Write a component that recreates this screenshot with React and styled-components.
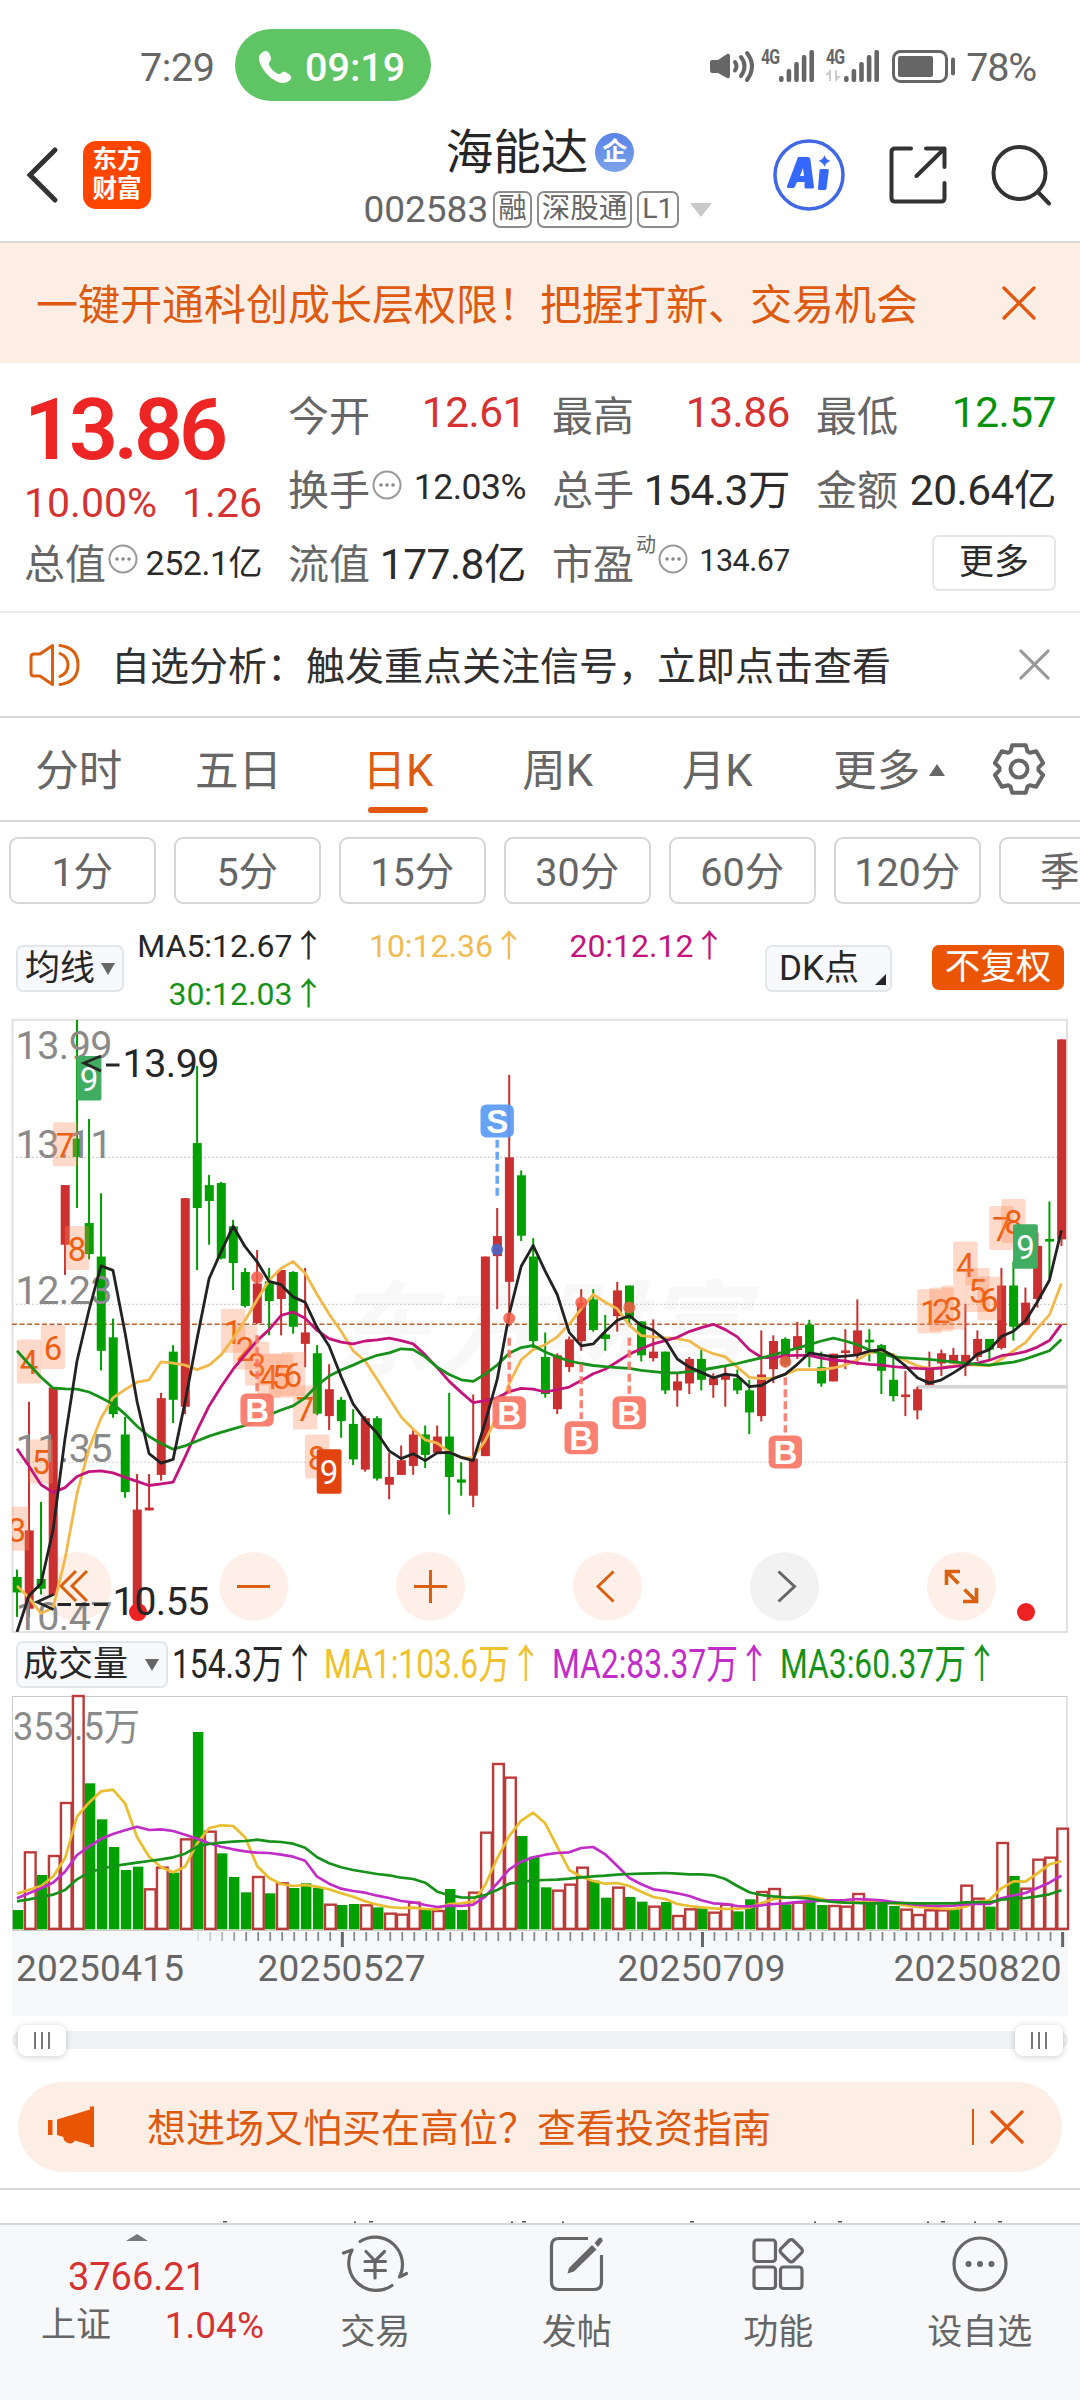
import React from "react";
import styled, { createGlobalStyle, css } from "styled-components";

const GlobalStyle = createGlobalStyle`
  * {
    box-sizing: border-box;
  }
  body {
    margin: 0;
    background: #fff;
    font-family: Roboto, "Noto Sans CJK SC", sans-serif;
    color: #262626;
  }
  svg {
    display: block;
    flex-shrink: 0;
    overflow: visible;
  }
`;

const Page = styled.div`
  width: 1080px;
  height: 2400px;
  display: flex;
  flex-direction: column;
  overflow: hidden;
  background: #fff;
`;

/* ---------- status bar ---------- */
const StatusBar = styled.div`
  height: 131px;
  padding: 0 44px 0 140px;
  display: flex;
  align-items: center;
  color: #666;
  font-size: 39.5px;
`;
const Clock = styled.span`
  width: 95px;
  padding-top: 4px;
  letter-spacing: -0.4px;
`;
const CallPill = styled.div`
  width: 196px;
  height: 72px;
  border-radius: 36px;
  background: #5fc564;
  color: #fff;
  font-weight: 500;
  display: flex;
  align-items: center;
  padding: 4px 0 0 23px;
  gap: 13px;
`;
const StatusIcons = styled.div`
  margin-left: auto;
  padding-top: 4px;
  display: flex;
  align-items: center;
  gap: 10px;
  letter-spacing: -1.2px;
`;

/* ---------- header ---------- */
const Header = styled.header`
  height: 112px;
  display: grid;
  grid-template-columns: 310px 460px 310px;
  border-bottom: 2px solid #dadada;
`;
const HeaderLeft = styled.div`
  display: flex;
  align-items: center;
  padding: 0 0 22px 25px;
  gap: 24px;
`;
const Logo = styled.div`
  width: 68px;
  height: 68px;
  border-radius: 13px;
  background: #ff4600;
  color: #fff;
  font-size: 24.5px;
  font-weight: 700;
  line-height: 29px;
  padding-top: 4px;
  text-align: center;
`;
const HeaderCenter = styled.div`
  display: flex;
  flex-direction: column;
  align-items: center;
`;
const TitleRow = styled.div`
  height: 45px;
  display: flex;
  align-items: center;
  gap: 7px;
  font-size: 47.5px;
  line-height: 45px;
`;
const CompanyBadge = styled.span`
  width: 39px;
  height: 39px;
  margin-bottom: 2px;
  border-radius: 50%;
  background: linear-gradient(#5a83e8, #7ba3ea);
  color: #fff;
  font-size: 25px;
  font-weight: 700;
  line-height: 38px;
  text-align: center;
`;
const CodeRow = styled.div`
  margin: 14px 5px 0 0;
  display: flex;
  align-items: center;
  gap: 5px;
  color: #666;
  font-size: 37px;
  line-height: 40px;
`;
const Tag = styled.span`
  height: 37px;
  padding: 0 3px;
  border: 2px solid #8c8c8c;
  border-radius: 7px;
  font-size: 28.5px;
  line-height: 32px;
`;
const DownCaret = styled.i`
  border: 11px solid transparent;
  border-top: 14px solid #c9c9c9;
  border-bottom: 0;
  margin-left: 6px;
`;
const HeaderRight = styled.div`
  display: flex;
  align-items: center;
  padding: 0 0 21px 3px;
  gap: 43px;
`;

/* ---------- banner ---------- */
const Banner = styled.div`
  height: 120px;
  background: #fdeee5;
  color: #dd5a10;
  font-size: 42px;
  display: flex;
  align-items: center;
  justify-content: space-between;
  padding: 0 44px 0 36px;
`;
const BannerText = styled.span`
  padding-bottom: 2px;
`;

/* ---------- quote ---------- */
const Quote = styled.section`
  height: 251px;
  padding: 13px 24px 0 24px;
  display: grid;
  grid-template-columns: 238px 238px 238px 240px;
  grid-template-rows: 74px 74px 74px;
  column-gap: 26px;
  border-bottom: 2px solid #ececec;
`;
const PriceCell = styled.div`
  grid-row: span 2;
  padding-top: 4px;
`;
const Price = styled.div`
  font-size: 86px;
  font-weight: 600;
  letter-spacing: -4.2px;
  line-height: 100px;
  color: #ee2525;
`;
const Change = styled.div`
  display: flex;
  justify-content: space-between;
  font-size: 41px;
  line-height: 46px;
  color: #d63232;
`;
const Cell = styled.div`
  display: flex;
  align-items: center;
  white-space: nowrap;
`;
const Label = styled.span`
  color: #666;
  font-size: 41px;
`;
const Value = styled.span`
  margin-left: auto;
  font-size: ${(p) => p.$size || 42.5}px;
  letter-spacing: -0.5px;
  color: ${(p) => p.$color || "#2b2b2b"};
`;
const Sup = styled.sup`
  align-self: flex-start;
  margin: 7px 0 0 2px;
  color: #666;
  font-size: 20px;
  line-height: 28px;
`;
const InfoMark = styled.span`
  margin: 0 0 4px 2px;
`;
const MoreButton = styled.button`
  width: 124px;
  height: 56px;
  margin: 11px 0 0 auto;
  border: 2px solid #e6e6e6;
  border-radius: 7px;
  background: #fff;
  color: #2b2b2b;
  font: 35px/48px Roboto, "Noto Sans CJK SC", sans-serif;
  padding: 0;
`;

/* ---------- notice ---------- */
const Notice = styled.div`
  height: 105px;
  padding: 0 30px 0 29px;
  display: flex;
  align-items: center;
  border-bottom: 2px solid #d8d8d8;
  font-size: 39px;
  color: #303030;
`;
const NoticeText = styled.span`
  flex: 1;
  padding: 0 0 3px 30px;
`;

/* ---------- tabs ---------- */
const Tabs = styled.nav`
  height: 104px;
  display: flex;
  border-bottom: 2px solid #d8d8d8;
  padding-right: 34px;
`;
const Tab = styled.div`
  width: 159.6px;
  display: flex;
  justify-content: center;
  position: relative;
  left: -1px;
  font-size: 43.5px;
  line-height: 108px;
  color: ${(p) => (p.$active ? "#dd5a10" : "#666")};
  ${(p) =>
    p.$active &&
    css`
      &::after {
        content: "";
        position: absolute;
        bottom: 7px;
        width: 60px;
        height: 6px;
        border-radius: 3px;
        background: #e4570f;
      }
    `}
`;
const UpCaret = styled.i`
  position: absolute;
  right: 12px;
  top: 46px;
  border: 8px solid transparent;
  border-bottom: 12px solid #666;
  border-top: 0;
`;
const GearWrap = styled.div`
  margin: 24px 0 0 auto;
`;

const Periods = styled.div`
  height: 81px;
  padding: 15px 0 0 9px;
  display: flex;
  gap: 18.5px;
`;
const Period = styled.div`
  flex: 0 0 146.5px;
  height: 67px;
  border: 2px solid #d6d6d6;
  border-radius: 9px;
  color: #666;
  font-size: 39.5px;
  line-height: 67px;
  text-align: center;
`;

/* ---------- indicators ---------- */
const IndicatorRow = styled.div`
  height: 107px;
  display: flex;
  padding: 0 16px;
`;
const Select = styled.div`
  width: ${(p) => p.$width}px;
  height: 47px;
  border: 2px solid #e2e6eb;
  border-radius: 7px;
  background: #f7f9fc;
  font-size: 35px;
  line-height: 42px;
  display: flex;
  align-items: center;
  justify-content: space-between;
  padding: 0 7px 0 ${(p) => p.$pad || 7}px;
`;
const SmallCaret = styled.i`
  border: 7.5px solid transparent;
  border-top: 12px solid #666;
  border-bottom: 0;
`;
const CornerMark = styled.i`
  align-self: flex-end;
  margin-bottom: 5px;
  border-left: 11px solid transparent;
  border-bottom: 11px solid #262626;
  margin-right: -3px;
`;
const Averages = styled.div`
  display: grid;
  grid-template-columns: repeat(3, 200.5px);
  grid-auto-rows: 48px;
  margin: 19px auto 0 0;
`;
const Average = styled.span`
  color: ${(p) => p.$color};
  text-align: right;
  font-size: 32px;
  line-height: 48px;
  white-space: nowrap;
`;
const RightTools = styled.div`
  display: flex;
  gap: 40px;
`;
const Adjust = styled.div`
  width: 132px;
  height: 45px;
  border-radius: 7px;
  background: #ea5504;
  color: #fff;
  font-size: 35.5px;
  line-height: 45px;
  text-align: center;
`;
const Dropped = styled.div`
  margin-top: 42px;
`;

const VolumeRow = styled.div`
  height: 54px;
  padding: 5px 16px 0;
  display: flex;
`;
const VolumeSelect = styled(Select)`
  padding-left: 5px;
`;
const VolumeValue = styled.span`
  width: ${(p) => p.$width}px;
  color: ${(p) => p.$color};
  white-space: nowrap;
  font-size: 40px;
  line-height: 48px;
  transform: scaleX(0.795);
  transform-origin: 0 50%;
`;
const VolumeValues = styled.div`
  display: flex;
  padding-left: 4px;
`;

/* ---------- range slider ---------- */
const Slider = styled.div`
  height: 66px;
  padding: 0 12px 18px;
  display: flex;
  align-items: center;
`;
const Track = styled.div`
  flex: 1;
  height: 18px;
  border-radius: 9px;
  background: #f0f1f4;
  display: flex;
  align-items: center;
  justify-content: space-between;
  padding: 0 5px 0 6px;
`;
const Handle = styled.div`
  width: 48px;
  height: 31px;
  border-radius: 8px;
  background: #fff;
  box-shadow: 0 1px 6px rgba(0, 0, 0, 0.2);
  display: flex;
  align-items: center;
  justify-content: center;
  gap: 5px;
`;
const Grip = styled.i`
  width: 2px;
  height: 17px;
  background: #777;
`;

/* ---------- guide ---------- */
const Guide = styled.div`
  margin: 0 18px;
  height: 90px;
  border-radius: 45px;
  background: #fdeee5;
  color: #dd5a10;
  font-size: 39px;
  display: flex;
  align-items: center;
  padding: 0 38px 1px 30px;
`;
const GuideText = styled.span`
  flex: 1;
  padding: 0 0 3px 52px;
`;
const Divider = styled.i`
  width: 2px;
  height: 36px;
  margin-right: 16px;
  background: #dd5a10;
`;
const NextSection = styled.div`
  margin-top: 16px;
  height: 35px;
  border-top: 2px solid #d8d8d8;
  display: flex;
  align-items: flex-end;
`;

/* ---------- bottom bar ---------- */
const BottomBar = styled.footer`
  height: 177px;
  border-top: 2px solid #d4d6d9;
  background: #f7f8fa;
  display: grid;
  grid-template-columns: 274px repeat(4, 201.5px);
  color: #666;
  font-size: 35px;
`;
const IndexCell = styled.div`
  display: flex;
  flex-direction: column;
  align-items: center;
`;
const IndexCaret = styled.i`
  margin: 9px 0 9px;
  border: 11px solid transparent;
  border-bottom: 7px solid #77787c;
  border-top: 0;
`;
const IndexValue = styled.div`
  color: #d63232;
  font-size: 38px;
  line-height: 54px;
`;
const IndexRow = styled.div`
  width: 100%;
  padding: 1px 10px 0 41px;
  display: flex;
  justify-content: space-between;
  line-height: 42px;
`;
const Percent = styled.span`
  color: #d63232;
  font-size: 37px;
`;
const NavItem = styled.div`
  display: flex;
  flex-direction: column;
  align-items: center;
  padding: 5px 0 0 1px;
  line-height: 44px;
`;
const NavLabel = styled.span`
  margin-top: 13px;
`;

/* ---------- icons ---------- */
const CloseIcon = ({ size = 34, color = "#e4570f" }) => (
  <svg width={size} height={size} viewBox="0 0 34 34">
    <path d="M2 2 L32 32 M32 2 L2 32" stroke={color} strokeWidth="3.300" strokeLinecap="round" />
  </svg>
);

const PhoneIcon = () => (
  <svg width="34" height="36" viewBox="0 0 34 36">
    <path
      d="M5 3 C9 0 12 4 13 9 C13.500 12 10 13 11 16 C13 20 16 23 20 25 C23 26 24 22 27 23 C32 25 35 28 32 31 C29 34 25 35 20 33 C11 29 3 20 1 11 C0.500 7 2 5 5 3 Z"
      fill="#fff"
    />
  </svg>
);

const InfoDots = () => (
  <svg width="30" height="30" viewBox="0 0 30 30">
    <circle cx="15" cy="15" r="13.500" fill="none" stroke="#999" strokeWidth="2" />
    <circle cx="9" cy="15" r="1.800" fill="#888" />
    <circle cx="15" cy="15" r="1.800" fill="#888" />
    <circle cx="21" cy="15" r="1.800" fill="#888" />
  </svg>
);

const StatusGlyphs = () => (
  <svg width="246" height="36" viewBox="0 0 246 36" fill="#666">
    <path d="M2 11 H8 L17 5 Q20 4 20 7 V27 Q20 30 17 29 L8 24 H2 Q0 24 0 21 V14 Q0 11 2 11 Z" />
    <g fill="none" stroke="#666" strokeWidth="4" strokeLinecap="round">
      <path d="M25 13 Q28 17 25 21.500" />
      <path d="M31 8 Q38 17 31 27" />
      <path d="M37 4 Q47 17 37 31" />
    </g>
    <text x="51" y="15" fontSize="20" fontWeight="700" textLength="18" lengthAdjust="spacingAndGlyphs">4G</text>
    <text x="116" y="15" fontSize="20" fontWeight="700" textLength="18" lengthAdjust="spacingAndGlyphs">4G</text>
    <path d="M115 26 L121 20 V32 H119 V26 Z M131 27 L125 33 V21 H127 V27 Z" fill="#ccc" />
    {[0, 65].map((dx) =>
      [6, 13, 20, 27, 32].map((h, i) => (
        <rect key={dx + "-" + i} x={69 + dx + i * 7.6} y={32 - h + 1} width="4.600" height={h} rx="2" />
      ))
    )}
    <rect x="183.500" y="2.500" width="53" height="30" rx="7" fill="none" stroke="#666" strokeWidth="3" />
    <rect x="188" y="7" width="35" height="21" rx="2" />
    <rect x="241" y="8.500" width="4" height="18" rx="2" />
  </svg>
);

const BackIcon = () => (
  <svg width="34" height="56" viewBox="0 0 34 56">
    <path d="M30 3 L5 28 L30 53" fill="none" stroke="#333" strokeWidth="5" strokeLinecap="round" />
  </svg>
);

const AiIcon = () => (
  <svg width="72" height="72" viewBox="0 0 72 72">
    <circle cx="36" cy="36" r="34" fill="none" stroke="#4067e6" strokeWidth="3.500" />
    <path
      fillRule="evenodd"
      fill="#3568ff"
      d="M25 18 H35 Q37 18 37.300 20 L41 48 Q41 49.500 39.500 49.500 H33 Q31.500 49.500 31.500 48 V43 H24 L22 47.500 Q21.300 49 20 49 H15 Q13.300 49 14 47.300 Z M30 29 L27 37 H31 Z"
    />
    <path fill="#3568ff" d="M48 30 H54 Q56 30 55.800 31.500 L53.500 49.500 Q53.300 51 51.500 51 H46.500 Q44.800 51 45 49.500 L46.500 31.500 Q46.600 30 48 30 Z" />
    <path fill="#3568ff" d="M51.500 16 Q52.500 20.500 57.500 22 Q52.500 23.500 51.500 28 Q50.500 23.500 45.500 22 Q50.500 20.500 51.500 16 Z" />
  </svg>
);

const ShareIcon = () => (
  <svg width="60" height="60" viewBox="0 0 60 60">
    <g fill="none" stroke="#333" strokeWidth="4" strokeLinecap="round" strokeLinejoin="round">
      <path d="M23 3.500 H7 Q3.500 3.500 3.500 7 V53 Q3.500 56.500 7 56.500 H53 Q56.500 56.500 56.500 53 V38" />
      <path d="M38 3.500 H56.500 V22 M56 4 L28.500 31" />
    </g>
  </svg>
);

const SearchIcon = () => (
  <svg width="62" height="62" viewBox="0 0 62 62">
    <g fill="none" stroke="#333" strokeWidth="4" strokeLinecap="round">
      <circle cx="28.500" cy="29" r="26" />
      <path d="M47 48 L58 59.500" />
    </g>
  </svg>
);

const SpeakerIcon = () => (
  <svg width="52" height="44" viewBox="0 0 52 44">
    <g fill="none" stroke="#d9600f" strokeWidth="3" strokeLinejoin="round" strokeLinecap="round">
      <path d="M23.500 2.500 V41.500 L11 33 H5 Q2 33 2 30 V14 Q2 11 5 11 H11 Z" />
      <path d="M31 10.500 Q39 14 39 22 Q39 30 31 33.500" />
      <path d="M31 2.500 Q49 5 49 22 Q49 39 31 41.500" />
    </g>
  </svg>
);

const gearPoints = [0, 1, 2, 3, 4, 5]
  .map((k) =>
    [
      [-26, 19.5],
      [-16, 24.8],
      [16, 24.8],
      [26, 19.5],
    ]
      .map(([da, r]) => {
        const a = ((k * 60 - 90 + da) * Math.PI) / 180;
        return `${(27 + r * Math.cos(a)).toFixed(1)},${(27 + r * Math.sin(a)).toFixed(1)}`;
      })
      .join(" ")
  )
  .join(" ");

const GearIcon = () => (
  <svg width="54" height="54" viewBox="0 0 54 54">
    <g fill="none" stroke="#666" strokeWidth="4" strokeLinejoin="round">
      <polygon points={gearPoints} />
      <circle cx="27" cy="27" r="8.500" />
    </g>
  </svg>
);

const HornIcon = () => (
  <svg width="47" height="42" viewBox="0 0 47 42" fill="#ea5504">
    <rect x="0" y="14" width="4.500" height="15" />
    <path d="M9 13.500 L42 3.500 V0.500 H46 V41 H42 V39 L27 34.500 Q24 39 19 36.500 Q15 34.500 15.500 31 L9 29 Z" />
  </svg>
);

const TradeIcon = () => (
  <svg width="68" height="68" viewBox="0 0 68 68">
    <g fill="none" stroke="#666" strokeWidth="3.200" strokeLinecap="round" strokeLinejoin="round">
      <path d="M19 11.500 A27.500 27.500 0 0 1 58.500 47 L65.500 43.500" />
      <path d="M51 55.500 A27.500 27.500 0 0 1 11 20 L2.500 23" />
      <path d="M25 21.500 L34 31 L43.500 21.500 M34 31 V48" />
      <path d="M24 31.500 H44.500 M24 40.500 H44.500" />
    </g>
  </svg>
);

const PostIcon = () => (
  <svg width="68" height="68" viewBox="0 0 68 68">
    <path
      d="M45 8.500 H16 Q8.500 8.500 8.500 16 V52 Q8.500 59.500 16 59.500 H51 Q58.500 59.500 58.500 52 V25"
      fill="none"
      stroke="#666"
      strokeWidth="3.200"
    />
    <path d="M49 15 L53.500 19.500 L31 41.500 L24.500 43.500 L26 38 Z" fill="#666" />
    <path d="M51.500 13 L55 9 Q57 6.500 59 8.500 Q60.500 10.500 58.500 12.500 L55 17 Z" fill="#666" />
  </svg>
);

const FeatureIcon = () => (
  <svg width="68" height="68" viewBox="0 0 68 68">
    <g fill="none" stroke="#666" strokeWidth="3.200">
      <rect x="10" y="10" width="21.500" height="21.500" rx="3" />
      <rect x="10" y="37" width="21.500" height="21.500" rx="3" />
      <rect x="36.500" y="37" width="21.500" height="21.500" rx="3" />
      <rect x="38.500" y="12" width="17.500" height="17.500" rx="3" transform="rotate(45 47.250 20.750)" />
    </g>
  </svg>
);

const WatchIcon = () => (
  <svg width="68" height="68" viewBox="0 0 68 68" fill="#666">
    <circle cx="34" cy="34" r="26" fill="none" stroke="#666" strokeWidth="3.200" />
    <circle cx="22.500" cy="34" r="3" />
    <circle cx="34" cy="34" r="3" />
    <circle cx="45.500" cy="34" r="3" />
  </svg>
);

/* ---------- candle chart ---------- */
// plot values are kept on a 1534 unit high grid, 2.45 units per pixel
const RED = "#cc2f2f";
const GREEN = "#00a000";
const px = (i) => 17 + i * 12.005;
const py = (v) => v / 2.45;

// direction, high, body top, body bottom, low
const candles = `g 1371 1389 1427 1487|r 960 1275 1467 1487|g 1205 1394 1418 1432|r 925 925 1434 1434|r 429 429 575 649|g 24 315 360 485|g 267 522 598 611|g 449 604 835 883|g 756 802 990 999|g 997 1040 1181 1195|r 1137 1224 1465 1490|r 1137 1219 1226 1226|r 938 951 1139 1153|g 821 837 955 1012|r 461 461 972 990|g 137 326 485 637|g 404 429 468 575|g 421 424 609 611|g 514 530 620 686|g 632 642 725 729|r 588 670 767 769|g 632 665 713 797|r 637 637 708 797|g 640 642 776 793|r 632 790 818 875|g 821 841 989 993|r 868 929 995 1029|g 948 955 1007 1048|g 978 1014 1101 1115|r 995 1000 1126 1131|g 995 1000 1148 1153|r 1085 1144 1163 1199|r 1067 1103 1139 1139|r 1027 1040 1117 1139|g 1018 1040 1090 1122|r 1018 1045 1085 1085|g 938 1045 1144 1236|g 1108 1150 1158 1190|r 942 1099 1190 1218|r 604 604 1093 1093|r 485 554 603 733|r 159 361 666 775|g 393 405 553 566|g 559 604 811 828|g 790 850 941 950|r 841 846 978 990|r 800 807 875 887|r 684 718 811 835|g 684 709 784 788|g 747 795 806 835|r 666 687 750 788|g 675 675 757 775|g 763 763 846 861|r 758 837 853 861|g 837 837 932 941|r 892 910 932 972|r 850 855 915 941|g 832 855 906 932|r 890 902 919 950|r 872 893 906 972|g 881 902 932 941|g 906 932 986 1039|r 785 893 995 1008|r 797 811 880 914|g 802 806 870 875|r 764 799 833 855|g 759 771 842 875|g 837 875 915 923|r 842 842 910 910|r 782 834 838 880|r 709 785 845 870|g 782 808 812 861|g 818 821 884 941|g 841 906 946 959|r 884 942 946 995|r 923 929 981 1003|r 837 875 919 919|r 832 841 866 897|r 828 845 866 866|r 720 845 870 897|r 785 806 850 860|g 806 806 832 860|r 632 675 828 832|g 616 675 776 810|r 680 717 772 772|r 545 578 708 729|g 469 561 565 655|r 72 72 562 578`
  .split("|")
  .map((row) => {
    const [dir, ...v] = row.split(" ");
    return [dir, ...v.map(Number)];
  });

const priceLines = [
  {
    color: "#f2b94a",
    data: [1411, 1440, 1478, 1465, 1345, 1185, 1075, 1000, 950, 930, 912, 906, 862, 865, 870, 881, 870, 845, 805, 760, 710, 662, 633, 616, 645, 697, 745, 787, 835, 860, 905, 951, 997, 1027, 1053, 1061, 1083, 1097, 1097, 1055, 995, 915, 857, 832, 820, 801, 770, 732, 697, 716, 732, 772, 798, 801, 803, 805, 811, 830, 842, 850, 875, 900, 903, 902, 892, 881, 881, 881, 877, 870, 857, 840, 837, 845, 859, 872, 878, 876, 872, 869, 870, 872, 855, 835, 815, 780, 747, 670],
  },
  {
    color: "#c4147c",
    data: [1075, 1118, 1163, 1182, 1170, 1143, 1131, 1129, 1134, 1145, 1155, 1165, 1161, 1157, 1095, 1030, 970, 923, 880, 845, 810, 783, 748, 740, 755, 785, 805, 814, 818, 811, 808, 804, 810, 818, 845, 876, 910, 937, 962, 957, 950, 935, 927, 929, 936, 930, 924, 908, 891, 880, 862, 843, 830, 818, 810, 802, 788, 778, 770, 783, 801, 832, 851, 852, 847, 846, 846, 853, 858, 860, 865, 868, 870, 874, 876, 878, 879, 877, 874, 870, 865, 858, 847, 843, 837, 826, 810, 770],
  },
  {
    color: "#16921a",
    data: [835, 868, 900, 926, 928, 929, 936, 950, 965, 990, 1020, 1045, 1062, 1076, 1068, 1056, 1044, 1035, 1026, 1018, 1006, 992, 980, 970, 950, 920, 897, 882, 870, 857, 846, 840, 830, 832, 850, 875, 893, 906, 910, 892, 870, 841, 827, 822, 838, 850, 860, 866, 871, 874, 876, 878, 883, 886, 889, 889, 886, 882, 877, 872, 866, 859, 852, 845, 837, 828, 820, 811, 804, 811, 820, 833, 842, 850, 852, 854, 856, 859, 862, 865, 868, 870, 866, 863, 855, 845, 835, 807],
  },
  {
    color: "#222",
    data: [1524, 1435, 1405, 1275, 1050, 860, 735, 627, 638, 790, 960, 1087, 1110, 1101, 960, 805, 658, 592, 530, 580, 617, 665, 673, 703, 716, 778, 823, 898, 965, 1005, 1037, 1080, 1099, 1087, 1104, 1085, 1084, 1096, 1104, 1010, 905, 745, 628, 577, 640, 697, 790, 823, 818, 788, 760, 749, 773, 785, 808, 855, 875, 888, 901, 892, 896, 923, 920, 903, 892, 868, 840, 845, 850, 848, 845, 836, 832, 848, 872, 901, 914, 906, 889, 870, 843, 832, 800, 787, 762, 715, 662, 540],
  },
];

// digit, candle index, top of the box
const counts = [
  [3, 0, 1217], [4, 1, 807], [5, 2, 1052], [6, 3, 772], [7, 4, 275], [8, 5, 529],
  [1, 18, 732], [2, 19, 773], [3, 20, 812], [4, 21, 842], [5, 22, 842], [6, 23, 838], [7, 24, 920], [8, 25, 1040],
  [1, 76, 684], [2, 77, 680], [3, 78, 675], [4, 79, 567], [5, 80, 632], [6, 81, 653], [7, 82, 480], [8, 83, 463],
];
const nines = [
  [6, 113, "#41ad63"],
  [26, 1076, "#e2440f"],
  [84, 525, "#41ad63"],
];

// letter, candle index, box centre, dash start, dash end, dot
const signals = [
  ["B", 20, 980, 797, 935, 655],
  ["S", 40, 272, 318, 456, 587],
  ["B", 41, 987, 803, 940, 755],
  ["B", 47, 1048, 868, 1002, 717],
  ["B", 51, 987, 803, 940, 729],
  ["B", 64, 1083, 900, 1035, 862],
];

const scaleLabels = [
  ["13.99", 120],
  ["13.11", 363],
  ["12.23", 721],
  ["11.35", 1108],
  ["10.47", 1518],
];

const toPoints = (data, y) => data.map((v, i) => `${px(i).toFixed(1)},${y(v).toFixed(1)}`).join(" ");

const CandleChart = () => (
  <svg width="1080" height="626" viewBox="0 0 1080 626">
    <defs>
      <clipPath id="plot">
        <rect x="12" y="10" width="1056" height="612" />
      </clipPath>
    </defs>
    <text x="330" y="358" fontSize="104" fontWeight="700" fontStyle="italic" fill="#f8f8f8">
      东方财富
    </text>
    {[361, 721, 1108].map((v) => (
      <line key={v} x1="12" x2="1067" y1={py(v)} y2={py(v)} stroke="#cfcfcf" strokeWidth="1.200" strokeDasharray="2 2" />
    ))}
    <rect x="12.500" y={py(24)} width="1054.500" height={py(1500)} fill="none" stroke="#e1e1e1" strokeWidth="2" />
    {[77, 254, 430.5, 607.5, 784.5, 961.5].map((x, i) => (
      <circle key={x} cx={x} cy="576.500" r="34.500" fill={i === 4 ? "#f2f2f2" : "#fef0e8"} />
    ))}
    <g fill="none" stroke="#d9600f" strokeWidth="3">
      <path d="M76 561 L61 576 L76 591 M87 561 L72 576 L87 591" />
      <path d="M237 576.500 H270" />
      <path d="M414 576.500 H447 M430.500 560 V593" />
      <path d="M613.500 561.500 L598 576.500 L613.500 591.500" />
      <path d="M778.500 561.500 L794.500 576.500 L778.500 591.500" stroke="#666" />
      <path d="M946.500 575 V561.500 H960 M947 562 L958.500 573.500 M976.500 578 V591.500 H963 M976 591 L964.500 579.500" strokeWidth="3.600" />
    </g>
    <line x1="12" x2="1067" y1={py(770)} y2={py(770)} stroke="#b9622f" strokeWidth="1.500" strokeDasharray="5 2.500" />
    <line x1="917" x2="1067" y1={py(923)} y2={py(923)} stroke="#d3d4d7" strokeWidth="3.500" />
    <g clipPath="url(#plot)">
      {candles.map(([dir, high, top, bottom, low], i) => (
        <g key={i} fill={dir === "r" ? RED : GREEN}>
          <rect x={px(i) - 1} y={py(high)} width="2" height={py(low - high)} />
          <rect x={px(i) - 4.3} y={py(top)} width="9" height={Math.max(py(bottom - top), 2.6)} />
        </g>
      ))}
      {scaleLabels.map(([t, y]) => (
        <text key={t} x="15.500" y={py(y)} fontSize="39.500" fill="#8a8a8a" textLength="97">
          {t}
        </text>
      ))}
      {counts.map(([n, i, top]) => (
        <g key={n + "-" + i}>
          <rect x={px(i) - 12.2} y={py(top)} width="24.400" height="44" rx="2" fill="#ff8c5a" fillOpacity="0.330" />
          <text x={px(i)} y={py(top + 86)} fontSize="33" fill="#ee5f12" textAnchor="middle">
            {n}
          </text>
        </g>
      ))}
      {nines.map(([i, top, color]) => (
        <g key={i}>
          <rect x={px(i) - 12.4} y={py(top)} width="24.800" height="44.500" rx="2" fill={color} />
          <text x={px(i)} y={py(top + 85)} fontSize="33" fill="#fff" textAnchor="middle">
            9
          </text>
        </g>
      ))}
      {priceLines.map(({ color, data }) => (
        <polyline key={color} points={toPoints(data, py)} fill="none" stroke={color} strokeWidth="2.800" strokeLinejoin="round" />
      ))}
      {signals.map(([letter, i, box, from, to, dot]) => {
        const main = letter === "S" ? "#5a9cf5" : "#fa7766";
        return (
          <g key={i}>
            <line x1={px(i)} x2={px(i)} y1={py(from)} y2={py(to)} stroke={main} strokeOpacity="0.900" strokeWidth="3.500" strokeDasharray="8 4" />
            <circle cx={px(i)} cy={py(dot)} r="6" fill={letter === "S" ? "#4468cf" : "#f75a45"} fillOpacity="0.850" />
            <rect x={px(i) - 16.7} y={py(box) - 16.5} width="33.400" height="33" rx="6" fill={main} fillOpacity="0.930" />
            <text x={px(i)} y={py(box) + 12} fontSize="33" fontWeight="700" fill="#fff" textAnchor="middle" fontFamily="Liberation Sans">
              {letter}
            </text>
          </g>
        );
      })}
      <circle cx="138" cy={py(1475)} r="9" fill="#ee2222" />
      <circle cx="1026" cy={py(1475)} r="9" fill="#ee2222" />
    </g>
    <g fill="none" stroke="#262626" strokeWidth="2.800">
      <path d="M101 46 L84 53 L101 61 M106 55 H119.500" />
      <path d="M53.500 584.500 L37 592 L53.500 599.500 M57.500 594.500 H71 M75.500 594.500 H89.500 M94 594.500 H108" />
    </g>
    <g fontSize="39.500" fill="#262626">
      <text x="122.500" y={py(163)} textLength="97">
        13.99
      </text>
      <text x="112.500" y={py(1483)} textLength="97">
        10.55
      </text>
    </g>
  </svg>
);

/* ---------- volume chart ---------- */
const volumes =
  "g840 r664 g735 r675 r516 r195 g460 g568 g651 g720 g710 r775 r710 g728 r625 g306 r602 g670 g741 g787 r738 g790 r757 g774 g760 g773 r821 g825 g822 r823 g832 r848 r851 r815 g840 r840 g777 g840 r785 r605 r399 r440 g618 g680 g772 r779 r761 r710 g752 g803 r770 g801 g815 r827 g816 r855 r835 g835 r845 r821 g844 g808 r783 r774 g823 r815 g812 g825 r825 r827 r789 g817 g817 g828 r836 r852 r838 r838 g838 r764 r803 g830 r636 g738 r773 r686 r680 r593"
    .split(" ")
    .map((s) => [s[0], Number(s.slice(1))]);

const volumeLines = [
  {
    color: "#e9bd2c",
    data: [791, 779, 768, 740, 685, 560, 518, 484, 479, 520, 622, 680, 712, 727, 710, 640, 594, 586, 588, 622, 708, 744, 762, 768, 765, 770, 778, 790, 800, 814, 824, 831, 834, 833, 837, 838, 822, 820, 815, 765, 685, 618, 572, 548, 580, 650, 720, 740, 753, 761, 759, 768, 785, 801, 807, 822, 828, 832, 835, 837, 836, 833, 820, 807, 803, 800, 798, 806, 815, 818, 817, 815, 816, 820, 826, 831, 833, 836, 837, 830, 816, 810, 775, 754, 755, 730, 703, 694],
  },
  {
    color: "#c22cc8",
    data: [805, 790, 775, 758, 725, 675, 650, 627, 612, 601, 590, 600, 598, 603, 614, 626, 640, 650, 658, 664, 668, 669, 674, 680, 692, 740, 761, 776, 783, 788, 797, 804, 813, 817, 825, 831, 827, 828, 824, 800, 760, 718, 695, 682, 674, 669, 667, 654, 651, 673, 708, 744, 763, 778, 783, 790, 798, 811, 820, 822, 828, 829, 826, 822, 820, 816, 814, 812, 811, 810, 807, 809, 811, 816, 820, 825, 827, 828, 827, 823, 822, 822, 805, 796, 789, 774, 758, 737],
  },
  {
    color: "#16921a",
    data: [814, 808, 801, 794, 780, 748, 727, 717, 708, 703, 698, 693, 688, 682, 671, 650, 642, 638, 635, 633, 629, 634, 636, 641, 653, 682, 700, 712, 720, 726, 732, 736, 743, 747, 758, 785, 796, 802, 803, 795, 780, 761, 756, 751, 750, 749, 746, 742, 739, 737, 734, 732, 731, 730, 729, 731, 733, 733, 736, 747, 768, 787, 795, 799, 802, 803, 806, 812, 816, 818, 819, 820, 820, 819, 819, 820, 820, 820, 820, 817, 816, 817, 809, 806, 804, 799, 793, 781],
  },
];
const vy = (v) => v / 3 - 60;
const dates = [
  ["20250415", 16],
  ["20250527", 257.5],
  ["20250709", 617.5],
  ["20250820", 893.5],
];

const VolumeChart = () => (
  <svg width="1080" height="326" viewBox="0 0 1080 326">
    <rect x="12.500" y="6.500" width="1054.500" height="234" fill="none" stroke="#c9c9c9" />
    {volumes.map(([dir, top], i) =>
      dir === "g" ? (
        <rect key={i} x={px(i) - 4.2} y={vy(top)} width="10.500" height={(898 - top) / 3} fill={GREEN} />
      ) : (
        <rect key={i} x={px(i) - 4.1} y={vy(top) + 1} width="10.700" height={(898 - top) / 3 - 1.5} fill="#fff" stroke="#bd3a3a" strokeWidth="2.400" />
      )
    )}
    <text x="13" y={vy(331)} fontSize="38" fill="#8a8a8a" textLength="127" lengthAdjust="spacingAndGlyphs">
      353.5万
    </text>
    {volumeLines.map(({ color, data }) => (
      <polyline key={color} points={toPoints(data, vy)} fill="none" stroke={color} strokeWidth="2.700" strokeLinejoin="round" />
    ))}
    <rect x="12" y="242" width="1056" height="84" fill="#f7f8fa" />
    {volumes.map((_, i) => {
      if (i < 15) return null;
      const major = i === 27 || i === 57 || i === 87;
      return (
        <rect
          key={i}
          x={px(i) + (major ? -0.3 : 0.2)}
          y="242"
          width={major ? 3 : 1.8}
          height={major ? 15 : 9}
          fill={major ? "#666" : "#888"}
          opacity={Math.min(1, (i - 14) / 5)}
        />
      );
    })}
    <g fontSize="37" fill="#666">
      {dates.map(([d, x]) => (
        <text key={d} x={x} y="291" textLength="168">
          {d}
        </text>
      ))}
    </g>
  </svg>
);

// upper edges of the section titles that stay behind the bottom bar
const NextTitles = () => (
  <svg width="1080" height="3" viewBox="0 0 1080 3" fill="#555">
    {[223, 354, 369, 511, 522, 562, 690, 814, 838, 927, 941, 974, 998].map((x, i) => (
      <rect key={x} x={x} y={i % 2 ? 1.5 : 1} width={i % 2 ? 2 : 4} height="1.500" />
    ))}
  </svg>
);

const quoteCells = [
  { label: "今开", value: "12.61", color: "#d63232" },
  { label: "最高", value: "13.86", color: "#d63232" },
  { label: "最低", value: "12.57", color: "#0a910a" },
  { label: "换手", value: "12.03%", info: true, size: 35.5 },
  { label: "总手", value: "154.3万" },
  { label: "金额", value: "20.64亿" },
  { label: "总值", value: "252.1亿", info: true, size: 34 },
  { label: "流值", value: "177.8亿" },
  { label: "市盈", value: "134.67", sup: "动", info: true, size: 30.5 },
];
const tabs = ["分时", "五日", "日K", "周K", "月K", "更多"];
const periods = ["1分", "5分", "15分", "30分", "60分", "120分", "季K"];
const navItems = [
  ["交易", TradeIcon],
  ["发帖", PostIcon],
  ["功能", FeatureIcon],
  ["设自选", WatchIcon],
];

const SliderHandle = () => (
  <Handle>
    <Grip />
    <Grip />
    <Grip />
  </Handle>
);

const App = () => {
  return (
    <Page>
      <GlobalStyle />
      <StatusBar>
        <Clock>7:29</Clock>
        <CallPill>
          <PhoneIcon />
          09:19
        </CallPill>
        <StatusIcons>
          <StatusGlyphs />
          <span>78%</span>
        </StatusIcons>
      </StatusBar>

      <Header>
        <HeaderLeft>
          <BackIcon />
          <Logo>
            东方
            <br />
            财富
          </Logo>
        </HeaderLeft>
        <HeaderCenter>
          <TitleRow>
            海能达
            <CompanyBadge>企</CompanyBadge>
          </TitleRow>
          <CodeRow>
            002583
            <Tag>融</Tag>
            <Tag>深股通</Tag>
            <Tag>L1</Tag>
            <DownCaret />
          </CodeRow>
        </HeaderCenter>
        <HeaderRight>
          <AiIcon />
          <ShareIcon />
          <SearchIcon />
        </HeaderRight>
      </Header>

      <Banner>
        <BannerText>一键开通科创成长层权限！把握打新、交易机会</BannerText>
        <CloseIcon />
      </Banner>

      <Quote>
        <PriceCell>
          <Price>13.86</Price>
          <Change>
            <span>10.00%</span>
            <span>1.26</span>
          </Change>
        </PriceCell>
        {quoteCells.map(({ label, value, color, info, sup, size }) => (
          <Cell key={label}>
            <Label>{label}</Label>
            {sup && <Sup>{sup}</Sup>}
            {info && (
              <InfoMark>
                <InfoDots />
              </InfoMark>
            )}
            <Value $color={color} $size={size}>
              {value}
            </Value>
          </Cell>
        ))}
        <MoreButton>更多</MoreButton>
      </Quote>

      <Notice>
        <SpeakerIcon />
        <NoticeText>自选分析：触发重点关注信号，立即点击查看</NoticeText>
        <CloseIcon size={31} color="#999" />
      </Notice>

      <Tabs>
        {tabs.map((tab, i) => (
          <Tab key={tab} $active={i === 2}>
            {tab}
            {i === 5 && <UpCaret />}
          </Tab>
        ))}
        <GearWrap>
          <GearIcon />
        </GearWrap>
      </Tabs>

      <Periods>
        {periods.map((period) => (
          <Period key={period}>{period}</Period>
        ))}
      </Periods>

      <IndicatorRow>
        <Dropped>
          <Select $width={108}>
            均线
            <SmallCaret />
          </Select>
        </Dropped>
        <Averages>
          <Average $color="#262626">MA5:12.67↑</Average>
          <Average $color="#f0bb50">10:12.36↑</Average>
          <Average $color="#c4147c">20:12.12↑</Average>
          <Average $color="#16921a">30:12.03↑</Average>
        </Averages>
        <Dropped>
          <RightTools>
            <Select $width={127} $pad={12}>
              DK点
              <CornerMark />
            </Select>
            <Adjust>不复权</Adjust>
          </RightTools>
        </Dropped>
      </IndicatorRow>

      <CandleChart />

      <VolumeRow>
        <VolumeSelect $width={152}>
          成交量
          <SmallCaret />
        </VolumeSelect>
        <VolumeValues>
          <VolumeValue $width={152} $color="#262626">
            154.3万↑
          </VolumeValue>
          <VolumeValue $width={228} $color="#efc12f">
            MA1:103.6万↑
          </VolumeValue>
          <VolumeValue $width={228} $color="#c22cc8">
            MA2:83.37万↑
          </VolumeValue>
          <VolumeValue $width={228} $color="#16921a">
            MA3:60.37万↑
          </VolumeValue>
        </VolumeValues>
      </VolumeRow>

      <VolumeChart />

      <Slider>
        <Track>
          <SliderHandle />
          <SliderHandle />
        </Track>
      </Slider>

      <Guide>
        <HornIcon />
        <GuideText>想进场又怕买在高位？查看投资指南</GuideText>
        <Divider />
        <CloseIcon />
      </Guide>

      <NextSection>
        <NextTitles />
      </NextSection>

      <BottomBar>
        <IndexCell>
          <IndexCaret />
          <IndexValue>3766.21</IndexValue>
          <IndexRow>
            上证
            <Percent>1.04%</Percent>
          </IndexRow>
        </IndexCell>
        {navItems.map(([label, Icon]) => (
          <NavItem key={label}>
            <Icon />
            <NavLabel>{label}</NavLabel>
          </NavItem>
        ))}
      </BottomBar>
    </Page>
  );
};

export default App;
